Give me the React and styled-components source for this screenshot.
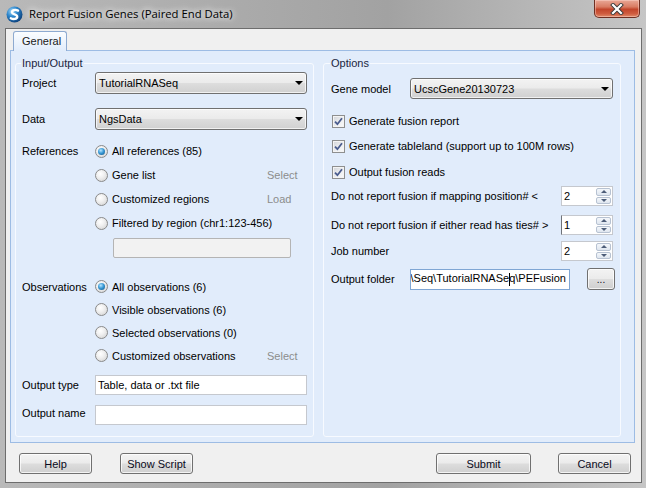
import React from "react";
import styled, { createGlobalStyle } from "styled-components";

const GlobalStyle = createGlobalStyle`
  html, body {
    margin: 0;
    padding: 0;
  }
  body {
    width: 646px;
    height: 488px;
    overflow: hidden;
    background: #ffffff;
    font-family: "Liberation Sans", Arial, sans-serif;
    font-size: 11px;
    color: #000;
  }
`;

const Frame = styled.div`
  width: 646px;
  height: 488px;
  box-sizing: border-box;
  display: flex;
  flex-direction: column;
  padding: 0 4px 5px 5px;
  background: linear-gradient(
    90deg,
    #b9b9b9 0%,
    #ababab 35%,
    #a2a2a2 60%,
    #b6b6b6 82%,
    #c6c6c6 100%
  );
`;

const TitleBar = styled.div`
  height: 28px;
  flex: none;
  display: flex;
  align-items: center;
`;

const TitleIcon = styled.svg`
  width: 17px;
  height: 17px;
  margin-left: 1px;
  flex: none;
`;

const TitleText = styled.span`
  margin-left: 6px;
  font-family: "Open Sans", "Noto Sans", sans-serif;
  font-size: 11.3px;
  color: #000;
  text-shadow: 0 0 6px #fff, 0 0 10px rgba(255, 255, 255, 0.85);
  margin-top: -1px;
`;

const CloseButton = styled.div`
  align-self: flex-start;
  margin-left: auto;
  margin-right: 2px;
  width: 46px;
  height: 18px;
  box-sizing: border-box;
  border: 1px solid #6e2f22;
  border-top: none;
  border-radius: 0 0 5px 5px;
  background: linear-gradient(
    180deg,
    #e9a896 0%,
    #d97c63 40%,
    #c2452b 55%,
    #cf5c3f 80%,
    #e08a69 100%
  );
  box-shadow: inset 0 0 0 1px rgba(255, 220, 210, 0.45);
  display: flex;
  align-items: center;
  justify-content: center;
`;

const Client = styled.div`
  flex: 1;
  border: 1px solid #6d6d6d;
  background: #f0f0f0;
  display: flex;
  flex-direction: column;
  min-height: 0;
`;

const TabStrip = styled.div`
  display: flex;
  padding: 2px 0 0 7px;
`;

const Tab = styled.div`
  width: 54px;
  height: 20px;
  box-sizing: border-box;
  padding: 3px 0 0 8px;
  border: 1px solid #8eaad0;
  border-bottom: none;
  border-radius: 3px 3px 0 0;
  background: linear-gradient(180deg, #fbfdff 0%, #e1ecfb 100%);
  margin-bottom: -1px;
  position: relative;
  z-index: 1;
  color: #1a1a1a;
`;

const TabPanel = styled.div`
  margin: 0 6px 0 4px;
  height: 393px;
  box-sizing: border-box;
  border: 1px solid #9dbce4;
  background: #e1ecfb;
  padding: 6px 0 5px 4px;
  display: flex;
  gap: 9px;
`;

const Group = styled.fieldset`
  margin: 0;
  width: ${(p) => p.$w}px;
  height: 380px;
  box-sizing: border-box;
  border: 1px solid #f7faff;
  border-radius: 3px;
  padding: 0 ${(p) => p.$pad}px 0 ${(p) => p.$pad}px;
  min-width: 0;
`;

const Legend = styled.legend`
  font-size: 11px;
  line-height: 13px;
  padding: 0 1px;
  margin-left: -1px;
  color: #1b2540;
`;

const Row = styled.div`
  display: flex;
  align-items: center;
  height: ${(p) => p.$h}px;
  margin-top: ${(p) => p.$mt || 0}px;
`;

const FieldLabel = styled.span`
  width: ${(p) => p.$w || 73}px;
  flex: none;
  white-space: nowrap;
  margin-top: ${(p) => p.$raise ? -p.$raise * 2 : 0}px;
`;

const WideLabel = styled.span`
  flex: 1;
  white-space: nowrap;
`;

const Combo = styled.div`
  flex: 1;
  height: ${(p) => p.$h || 22}px;
  box-sizing: border-box;
  border: 1px solid #707070;
  border-radius: 3px;
  background: linear-gradient(
    180deg,
    #f3f3f3 0%,
    #ebebeb 48%,
    #dddddd 52%,
    #d0d0d0 100%
  );
  box-shadow: inset 0 0 0 1px rgba(255, 255, 255, 0.7);
  display: flex;
  align-items: center;
  padding-left: 3px;
`;

const ComboText = styled.span`
  flex: 1;
`;

const ComboArrow = styled.span`
  width: 0;
  height: 0;
  border-left: 4px solid transparent;
  border-right: 4px solid transparent;
  border-top: 4px solid #000;
  margin-right: 3px;
`;

const RadioCircle = styled.span`
  width: 13px;
  height: 13px;
  flex: none;
  box-sizing: border-box;
  border-radius: 50%;
  border: 1px solid #8a8a8a;
  background: radial-gradient(
    circle at 40% 35%,
    #ffffff 0%,
    #f0f0f0 40%,
    #cfcfcf 100%
  );
  display: flex;
  align-items: center;
  justify-content: center;
`;

const RadioDot = styled.span`
  width: 7px;
  height: 7px;
  border-radius: 50%;
  background: radial-gradient(
    circle at 40% 35%,
    #b9e6ff 0%,
    #3a9ad6 45%,
    #0e4f80 100%
  );
`;

const OptionText = styled.span`
  margin-left: 4px;
  white-space: nowrap;
`;

const SideLink = styled.span`
  margin-left: auto;
  width: 40px;
  flex: none;
  color: #8c8c8c;
`;

const DisabledBox = styled.div`
  margin-left: 91px;
  width: 178px;
  height: 20px;
  box-sizing: border-box;
  border: 1px solid #b4b4b4;
  border-radius: 2px;
  background: #f2f2f2;
`;

const TextBox = styled.div`
  flex: ${(p) => (p.$w ? "none" : 1)};
  width: ${(p) => (p.$w ? `${p.$w}px` : "auto")};
  height: ${(p) => p.$h || 20}px;
  box-sizing: border-box;
  border: 1px solid ${(p) => p.$border || "#c5c8ce"};
  background: #fff;
  display: flex;
  align-items: center;
  justify-content: ${(p) => (p.$end ? "flex-end" : "flex-start")};
  padding: 0 ${(p) => (p.$end ? 3 : 0)}px 0 2px;
  overflow: hidden;
  white-space: nowrap;
`;

const Caret = styled.span`
  display: inline-block;
  width: 1px;
  height: 13px;
  background: #000;
  margin-right: -1px;
  vertical-align: middle;
`;

const CheckBox = styled.span`
  width: 13px;
  height: 13px;
  flex: none;
  margin-left: 1px;
  box-sizing: border-box;
  border: 1px solid #8e8f8f;
  background: linear-gradient(135deg, #d2d4d8 0%, #eef0f2 60%, #fafafa 100%);
  box-shadow: inset 0 0 0 1px #f4f4f4;
  display: flex;
  align-items: center;
  justify-content: center;
`;

const SpinBox = styled.div`
  width: 52px;
  height: 20px;
  box-sizing: border-box;
  border: 1px solid #c5c8ce;
  border-left-color: ${(p) => p.$dark ? "#6f737a" : "#c5c8ce"};
  background: #fff;
  display: flex;
  align-items: stretch;
`;

const SpinValue = styled.span`
  flex: 1;
  padding-left: 2px;
  display: flex;
  align-items: center;
`;

const SpinButtons = styled.div`
  width: 15px;
  display: flex;
  flex-direction: column;
  gap: 1px;
  padding: 1px 1px 1px 0;
`;

const SpinHalf = styled.div`
  flex: 1;
  border: 1px solid #b7c2d2;
  border-radius: 2px;
  background: linear-gradient(180deg, #f4f7fb 0%, #dfe6ef 100%);
  display: flex;
  align-items: center;
  justify-content: center;
`;

const SpinArrow = styled.span`
  width: 0;
  height: 0;
  border-left: 3px solid transparent;
  border-right: 3px solid transparent;
  ${(p) =>
    p.$up
      ? "border-bottom: 3px solid #4d5d78;"
      : "border-top: 3px solid #4d5d78;"}
`;

const Button = styled.div`
  width: ${(p) => p.$w}px;
  height: ${(p) => p.$h || 21}px;
  box-sizing: border-box;
  flex: none;
  border: 1px solid #707070;
  border-radius: 3px;
  background: linear-gradient(
    180deg,
    #f3f3f3 0%,
    #ebebeb 48%,
    #dddddd 52%,
    #cfcfcf 100%
  );
  box-shadow: inset 0 0 0 1px rgba(255, 255, 255, 0.75);
  display: flex;
  align-items: center;
  justify-content: center;
  color: #0a0a20;
`;

const BrowseButton = styled(Button)`
  margin-left: 17px;
  margin-right: -1px;
  align-items: flex-end;
  padding-bottom: 4px;
  font-size: 10px;
`;

const ButtonBar = styled.div`
  display: flex;
  align-items: center;
  padding: 10px 10px 0 13px;
  gap: 28px;
`;

const Spacer = styled.div`
  flex: 1;
`;

const RightButtons = styled.div`
  display: flex;
  gap: 27px;
`;

const Radio = ({ checked, children, link, mt = 0, h = 24 }) => (
  <Row $h={h} $mt={mt}>
    <FieldLabel>{null}</FieldLabel>
    <RadioCircle>{checked && <RadioDot />}</RadioCircle>
    <OptionText>{children}</OptionText>
    {link && <SideLink>{link}</SideLink>}
  </Row>
);

const LabeledRadio = ({ label, checked, children, mt = 0, h = 24 }) => (
  <Row $h={h} $mt={mt}>
    <FieldLabel>{label}</FieldLabel>
    <RadioCircle>{checked && <RadioDot />}</RadioCircle>
    <OptionText>{children}</OptionText>
  </Row>
);

const Check = ({ children, mt }) => (
  <Row $h={20} $mt={mt}>
    <CheckBox>
      <svg width="9" height="9" viewBox="0 0 9 9">
        <path
          d="M1 4.6 L3.4 7.2 L8 1.2"
          fill="none"
          stroke="#4a5c8e"
          strokeWidth="1.8"
        />
      </svg>
    </CheckBox>
    <OptionText>{children}</OptionText>
  </Row>
);

const Spin = ({ label, value, mt, dark }) => (
  <Row $h={20} $mt={mt}>
    <WideLabel>{label}</WideLabel>
    <SpinBox $dark={dark}>
      <SpinValue>{value}</SpinValue>
      <SpinButtons>
        <SpinHalf>
          <SpinArrow $up />
        </SpinHalf>
        <SpinHalf>
          <SpinArrow />
        </SpinHalf>
      </SpinButtons>
    </SpinBox>
  </Row>
);

const AppIcon = () => (
  <TitleIcon viewBox="0 0 17 17">
    <defs>
      <radialGradient id="ig" cx="35%" cy="30%" r="75%">
        <stop offset="0%" stopColor="#a8dcfa" />
        <stop offset="45%" stopColor="#2d86cc" />
        <stop offset="100%" stopColor="#0b3f7a" />
      </radialGradient>
    </defs>
    <circle cx="8.5" cy="8.5" r="8" fill="url(#ig)" />
    <path
      d="M12 4.6 C9.5 3.2 5.6 4 6 6.6 C6.4 8.8 11.4 8 11.2 10.8 C11 13 7.4 13.6 4.8 12.2"
      fill="none"
      stroke="#fff"
      strokeWidth="2.4"
      strokeLinecap="round"
    />
  </TitleIcon>
);

const App = () => {
  return (
    <>
      <GlobalStyle />
      <Frame>
        <TitleBar>
          <AppIcon />
          <TitleText>Report Fusion Genes (Paired End Data)</TitleText>
          <CloseButton>
            <svg width="14" height="12" viewBox="0 0 14 12">
              <path
                d="M3 2 L11 10 M11 2 L3 10"
                stroke="#3a3a3a"
                strokeWidth="4"
                strokeLinecap="square"
              />
              <path
                d="M3 2 L11 10 M11 2 L3 10"
                stroke="#ffffff"
                strokeWidth="2.2"
                strokeLinecap="square"
              />
            </svg>
          </CloseButton>
        </TitleBar>

        <Client>
          <TabStrip>
            <Tab>General</Tab>
          </TabStrip>
          <TabPanel>
            <Group $w={299} $pad={6}>
              <Legend>Input/Output</Legend>
              <Row $h={24} $mt={1}>
                <FieldLabel>Project</FieldLabel>
                <Combo>
                  <ComboText>TutorialRNASeq</ComboText>
                  <ComboArrow />
                </Combo>
              </Row>
              <Row $h={24} $mt={12}>
                <FieldLabel>Data</FieldLabel>
                <Combo>
                  <ComboText>NgsData</ComboText>
                  <ComboArrow />
                </Combo>
              </Row>
              <LabeledRadio label="References" checked mt={8}>
                All references (85)
              </LabeledRadio>
              <Radio link="Select">Gene list</Radio>
              <Radio link="Load">Customized regions</Radio>
              <Radio>Filtered by region (chr1:123-456)</Radio>
              <Row $h={21} $mt={2}>
                <DisabledBox />
              </Row>
              <LabeledRadio label="Observations" checked mt={17} h={23}>
                All observations (6)
              </LabeledRadio>
              <Radio h={23}>Visible observations (6)</Radio>
              <Radio h={23}>Selected observations (0)</Radio>
              <Radio h={23} link="Select">
                Customized observations
              </Radio>
              <Row $h={20} $mt={8}>
                <FieldLabel>Output type</FieldLabel>
                <TextBox>Table, data or .txt file</TextBox>
              </Row>
              <Row $h={20} $mt={10}>
                <FieldLabel $raise={2}>Output name</FieldLabel>
                <TextBox />
              </Row>
            </Group>

            <Group $w={298} $pad={7}>
              <Legend>Options</Legend>
              <Row $h={21} $mt={8}>
                <FieldLabel $w={79}>Gene model</FieldLabel>
                <Combo $h={21}>
                  <ComboText>UcscGene20130723</ComboText>
                  <ComboArrow />
                </Combo>
              </Row>
              <Check mt={12}>Generate fusion report</Check>
              <Check mt={5}>Generate tableland (support up to 100M rows)</Check>
              <Check mt={6}>Output fusion reads</Check>
              <Spin
                label="Do not report fusion if mapping position# <"
                value="2"
                mt={4}
              />
              <Spin
                label="Do not report fusion if either read has ties# >"
                value="1"
                mt={9}
                dark
              />
              <Spin label="Job number" value="2" mt={6} />
              <Row $h={22} $mt={7}>
                <FieldLabel $w={79}>Output folder</FieldLabel>
                <TextBox $w={160} $h={21} $end $border="#7fa6d4">
                  <span>
                    \Seq\TutorialRNASe
                    <Caret />
                    q\PEFusion
                  </span>
                </TextBox>
                <BrowseButton $w={28} $h={22}>
                  ...
                </BrowseButton>
              </Row>
            </Group>
          </TabPanel>

          <ButtonBar>
            <Button $w={73}>Help</Button>
            <Button $w={73}>Show Script</Button>
            <Spacer />
            <RightButtons>
              <Button $w={95}>Submit</Button>
              <Button $w={73}>Cancel</Button>
            </RightButtons>
          </ButtonBar>
        </Client>
      </Frame>
    </>
  );
};

export default App;
